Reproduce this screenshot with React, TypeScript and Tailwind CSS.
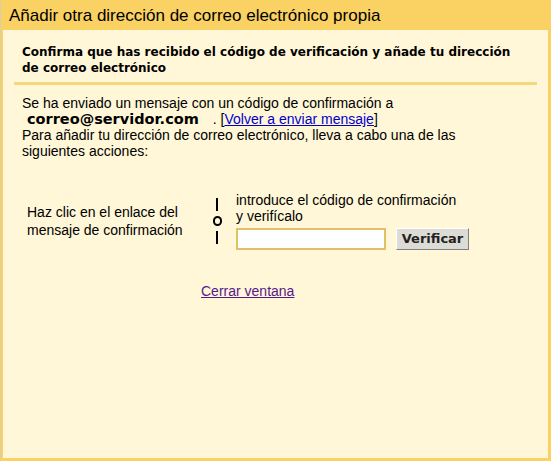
export default function App() {
  return (
    <div className="w-[551px] h-[461px] bg-[#fad163] border-l border-l-[#d8cfa8] flex flex-col font-['Liberation_Sans',Arial,sans-serif] text-black">
      <div className="h-[30px] flex items-center pl-[8px] pt-[1px] text-[17px]">
        Añadir otra dirección de correo electrónico propia
      </div>
      <div className="flex-1 ml-[2px] mr-[3px] mb-[3px] bg-[#fff7d7] px-[10px]">
        <div className="pt-[14px] pb-[6px] pl-[9px] font-['DejaVu_Sans',Verdana,sans-serif] font-bold text-[12px] leading-[16px] whitespace-nowrap">
          <div>Confirma que has recibido el código de verificación y añade tu dirección</div>
          <div>de correo electrónico</div>
        </div>
        <div className="h-[3px] bg-[#f6d77e] mx-[1px]" />
        <div className="pt-[10px] px-[9px] text-[14px] leading-[16px]">
          <div>Se ha enviado un mensaje con un código de confirmación a</div>
          <div className="flex items-baseline">
            <span className="font-['DejaVu_Sans',Verdana,sans-serif] font-bold text-[14.5px] pl-[5px]">correo@servidor.com</span>
            <span className="pl-[14px]">. [<a href="#" className="text-[#0000cc] underline">Volver a enviar mensaje</a>]</span>
          </div>
          <div>Para añadir tu dirección de correo electrónico, lleva a cabo una de las</div>
          <div>siguientes acciones:</div>
        </div>
        <div className="flex items-center mt-[33px] text-[14px]">
          <div className="w-[194px] pl-[14px] leading-[18px]">
            <div>Haz clic en el enlace del</div>
            <div>mensaje de confirmación</div>
          </div>
          <div className="w-[20px] flex flex-col items-center gap-[5px]">
            <div className="w-[2px] h-[13px] bg-black" />
            <div className="w-[9px] h-[10px] rounded-full border-2 border-black" />
            <div className="w-[2px] h-[13px] bg-black" />
          </div>
          <div className="pl-[9px] leading-[16px]">
            <div>introduce el código de confirmación</div>
            <div>y verifícalo</div>
            <div className="flex items-center gap-[10px] mt-[4px]">
              <input
                type="text"
                className="w-[150px] h-[22px] bg-white border-2 border-[#e2c067] outline-none px-[2px] text-[13px]"
              />
              <button className="w-[73px] h-[22px] bg-[#dddbd5] border border-t-white border-l-white border-r-[#808080] border-b-[#808080] font-['DejaVu_Sans',Verdana,sans-serif] font-bold text-[13px] text-[#222]">
                Verificar
              </button>
            </div>
          </div>
        </div>
        <div className="mt-[33px] pl-[188px] text-[14px] leading-[16px]">
          <a href="#" className="text-[#551a8b] underline">Cerrar ventana</a>
        </div>
      </div>
    </div>
  );
}
